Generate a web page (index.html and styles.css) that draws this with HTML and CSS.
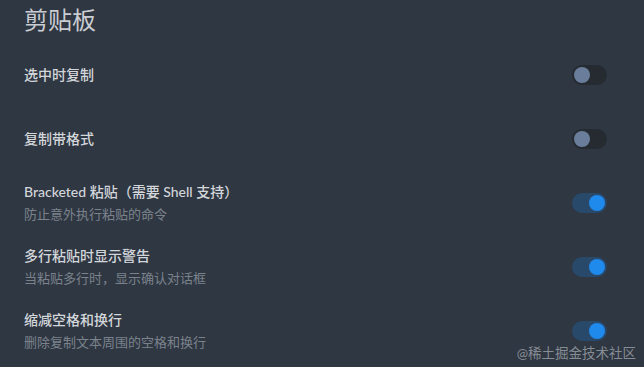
FILE: index.html
```html
<!DOCTYPE html>
<html lang="zh-CN">
<head>
  <meta charset="UTF-8">
  <meta name="viewport" content="width=device-width, initial-scale=1.0">
  <title>剪贴板</title>
  <link rel="stylesheet" href="styles.css">
</head>
<body>
  <div class="panel">
    <h1 class="title">剪贴板</h1>

    <div class="row">
      <div class="text">
        <div class="label">选中时复制</div>
      </div>
      <span class="switch"><span class="knob"></span></span>
    </div>

    <div class="row">
      <div class="text">
        <div class="label">复制带格式</div>
      </div>
      <span class="switch"><span class="knob"></span></span>
    </div>

    <div class="row">
      <div class="text">
        <div class="label">Bracketed 粘贴（需要 Shell 支持）</div>
        <div class="desc">防止意外执行粘贴的命令</div>
      </div>
      <span class="switch on"><span class="knob"></span></span>
    </div>

    <div class="row">
      <div class="text">
        <div class="label">多行粘贴时显示警告</div>
        <div class="desc">当粘贴多行时，显示确认对话框</div>
      </div>
      <span class="switch on"><span class="knob"></span></span>
    </div>

    <div class="row">
      <div class="text">
        <div class="label">缩减空格和换行</div>
        <div class="desc">删除复制文本周围的空格和换行</div>
      </div>
      <span class="switch on"><span class="knob"></span></span>
    </div>
  </div>

  <div class="watermark">@稀土掘金技术社区</div>
</body>
</html>
```

FILE: styles.css
```css
html, body {
  height: 100%;
}
body {
  margin: 0;
  background: #2f3742;
  font-family: "Lato", "Noto Sans CJK SC", sans-serif;
  color: #d6d9dd;
  overflow: hidden;
  position: relative;
}
.panel {
  padding: 5px 37px 0 24px;
}
.title {
  margin: 0 0 8px;
  font-size: 24px;
  line-height: 30px;
  font-weight: 400;
  color: #c9cdd3;
}
.row {
  height: 64px;
  display: flex;
  align-items: center;
  justify-content: space-between;
}
.label {
  font-size: 14px;
  line-height: 20px;
  font-weight: 500;
  color: #d3d6da;
}
.desc {
  margin-top: 2px;
  font-size: 13px;
  line-height: 20px;
  color: #7b828c;
}
.switch {
  width: 35px;
  height: 20px;
  border-radius: 10px;
  background: #262b32;
  display: flex;
  align-items: center;
  padding: 0 2px;
  box-sizing: border-box;
}
.knob {
  width: 16px;
  height: 16px;
  border-radius: 50%;
  background: #6a7e9b;
}
.switch.on {
  background: #29496b;
  justify-content: flex-end;
}
.switch.on .knob {
  background: #1f8aeb;
}
.watermark {
  position: absolute;
  right: 8px;
  bottom: 5px;
  font-size: 13.5px;
  line-height: 18px;
  color: #868c94;
}
```
